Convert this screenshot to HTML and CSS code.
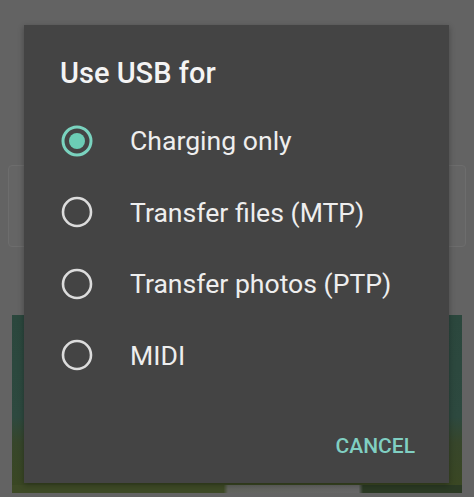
FILE: index.html
```html
<!DOCTYPE html>
<html lang="en">
<head>
  <meta charset="UTF-8">
  <title>Use USB for</title>
  <link rel="stylesheet" href="styles.css">
</head>
<body>
  <div class="scene">
    <div class="bg-card"></div>
    <div class="bg-photo"></div>
    <div class="bg-strip"></div>
  </div>

  <div class="dialog">
    <h1 class="dialog-title">Use USB for</h1>

    <div class="option-list">
      <div class="option">
        <svg class="radio" viewBox="0 0 32 32" width="32" height="32">
          <circle cx="16" cy="16" r="14" fill="none" stroke="#7ad3bf" stroke-width="3"/>
          <circle cx="16" cy="16" r="8" fill="#6ccdb5"/>
        </svg>
        <span class="option-label">Charging only</span>
      </div>
      <div class="option">
        <svg class="radio" viewBox="0 0 32 32" width="32" height="32">
          <circle cx="16" cy="16" r="14" fill="none" stroke="#dcdcdc" stroke-width="2.6"/>
        </svg>
        <span class="option-label">Transfer files (MTP)</span>
      </div>
      <div class="option">
        <svg class="radio" viewBox="0 0 32 32" width="32" height="32">
          <circle cx="16" cy="16" r="14" fill="none" stroke="#dcdcdc" stroke-width="2.6"/>
        </svg>
        <span class="option-label">Transfer photos (PTP)</span>
      </div>
      <div class="option">
        <svg class="radio" viewBox="0 0 32 32" width="32" height="32">
          <circle cx="16" cy="16" r="14" fill="none" stroke="#dcdcdc" stroke-width="2.6"/>
        </svg>
        <span class="option-label">MIDI</span>
      </div>
    </div>

    <div class="actions">
      <button class="cancel-btn">CANCEL</button>
    </div>
  </div>
</body>
</html>
```

FILE: styles.css
```css
body {
  margin: 0;
  background: #636363;
  font-family: Roboto, "Noto Sans", sans-serif;
  overflow: hidden;
}
.scene {
  height: 497px;
  padding-top: 165px;
  box-sizing: border-box;
}
.bg-card {
  margin: 0 8px;
  height: 80px;
  background: #656565;
  border: 1px solid #6d6d6d;
  border-radius: 4px;
}
.bg-photo {
  margin: 68px 12px 0;
  height: 170px;
  background: linear-gradient(#2b473d 0%, #2d493f 60%, #37462b 75%, #3a4723 100%);
}
.bg-strip {
  margin: 0 12px;
  height: 8px;
  background: linear-gradient(90deg, #3e4a26 0%, #3e4a26 47%, #62645e 48%, #666666 77%, #2b3a24 78%, #2b3a24 100%);
}

/* dialog floats over the dimmed screen */
.dialog {
  position: absolute;
  left: 24px;
  top: 25px;
  width: 425px;
  height: 458px;
  background: #444444;
  box-shadow: 0 2px 6px rgba(0, 0, 0, 0.3);
  padding-top: 29px;
  box-sizing: border-box;
}
.dialog-title {
  margin: 0;
  padding-left: 36px;
  font-size: 29px;
  line-height: 38px;
  font-weight: 500;
  color: #f4f4f4;
}
.option-list {
  margin-top: 13px;
}
.option {
  display: flex;
  align-items: center;
  height: 71.5px;
  padding-left: 37px;
  gap: 37px;
}
.radio {
  flex: none;
}
.option-label {
  font-size: 26.6px;
  color: #eeeeee;
}
.actions {
  display: flex;
  justify-content: flex-end;
  margin-top: 37px;
  padding-right: 34px;
}
.cancel-btn {
  background: none;
  border: none;
  padding: 0;
  height: 36px;
  font-family: Roboto, sans-serif;
  font-size: 21px;
  font-weight: 500;
  color: #80cfc2;
  cursor: pointer;
}
```
